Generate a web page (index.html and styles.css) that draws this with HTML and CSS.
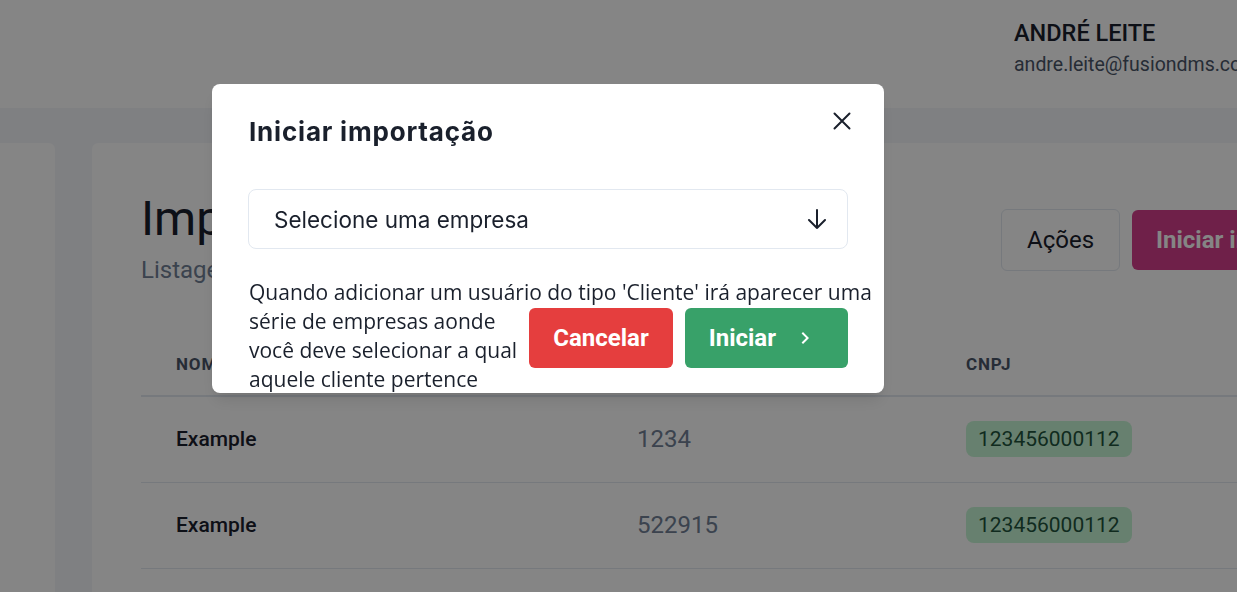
FILE: index.html
```html
<!DOCTYPE html>
<html lang="pt-BR">
<head>
<meta charset="utf-8">
<title>Importações</title>
<link rel="stylesheet" href="styles.css">
</head>
<body>
<div class="page">
  <header class="topbar">
    <div class="user">
      <div class="user-name">André Leite</div>
      <div class="user-email">andre.leite@fusiondms.com</div>
    </div>
  </header>
  <div class="content">
    <aside class="sidebar"></aside>
    <main class="main">
      <div class="main-head">
        <div class="heading">
          <h1 class="title">Importações</h1>
          <p class="subtitle">Listagem de importações</p>
        </div>
        <div class="head-actions">
          <button class="btn btn-outline">Ações</button>
          <button class="btn btn-pink">Iniciar importação</button>
        </div>
      </div>
      <table class="table">
        <thead>
          <tr><th class="col-name">Nome</th><th class="col-code">Código</th><th>CNPJ</th></tr>
        </thead>
        <tbody>
          <tr><td class="cell-name">Example</td><td class="cell-code">1234</td><td><span class="badge">123456000112</span></td></tr>
          <tr><td class="cell-name">Example</td><td class="cell-code">522915</td><td><span class="badge">123456000112</span></td></tr>
          <tr><td class="cell-name">Example</td><td class="cell-code">7781</td><td><span class="badge">123456000112</span></td></tr>
        </tbody>
      </table>
    </main>
  </div>
</div>

<div class="overlay">
  <section class="modal" role="dialog" aria-label="Iniciar importação">
    <h2 class="modal-title">Iniciar importação</h2>
    <button class="modal-close" aria-label="Fechar">
      <svg width="18" height="18" viewBox="0 0 18 18"><path d="M1.5 1.5L16.5 16.5M16.5 1.5L1.5 16.5" stroke="#1a202c" stroke-width="2" fill="none" stroke-linecap="round"/></svg>
    </button>
    <div class="select">
      <span>Selecione uma empresa</span>
      <svg class="select-icon" width="20" height="20" viewBox="0 0 20 20"><path d="M10 1V19M2 11L10 19L18 11" stroke="#1a202c" stroke-width="2" fill="none" stroke-linecap="round" stroke-linejoin="round"/></svg>
    </div>
    <p class="modal-text">Quando adicionar um usuário do tipo 'Cliente' irá aparecer uma <span class="modal-actions"><button class="btn btn-red">Cancelar</button><button class="btn btn-green">Iniciar<svg class="chev" width="24" height="24" viewBox="0 0 24 24"><path d="M10 6L8.59 7.41 13.17 12l-4.58 4.59L10 18l6-6z" fill="#fff"/></svg></button></span>série de empresas aonde você deve selecionar a qual aquele cliente pertence</p>
  </section>
</div>
</body>
</html>
```

FILE: styles.css
```css
* { box-sizing: border-box; }

html, body {
  margin: 0;
  padding: 0;
}

body {
  font-family: "Roboto", "Liberation Sans", sans-serif;
  color: #1a202c;
  background: #f3f5f9;
  overflow: hidden;
  width: 1237px;
  height: 592px;
}

.page {
  width: 1237px;
  height: 592px;
  overflow: hidden;
}

/* top bar */
.topbar {
  height: 108px;
  background: #fff;
  padding: 17px 0 0 1014px;
}

.user-name {
  font-size: 23.5px;
  font-weight: 500;
  text-transform: uppercase;
  line-height: 33px;
  white-space: nowrap;
}

.user-email {
  font-size: 19.5px;
  line-height: 29px;
  color: #4a5568;
  white-space: nowrap;
}

/* content */
.content {
  display: flex;
  padding-top: 35px;
  height: 484px;
}

.sidebar {
  flex: 0 0 55px;
  background: #fff;
  border-top-right-radius: 6px;
  margin-right: 37px;
}

.main {
  flex: 0 0 1145px;
  background: #fff;
  border-top-left-radius: 6px;
  padding: 47px 0 0 49px;
  overflow: hidden;
}

.main-head {
  display: flex;
  align-items: center;
}

.heading {
  flex: 0 0 860px;
}

.title {
  margin: 0;
  font-size: 48px;
  line-height: 58px;
  font-weight: 400;
  color: #1a202c;
}

.subtitle {
  margin: 4px 0 0;
  font-size: 24px;
  line-height: 36px;
  color: #718096;
}

.head-actions {
  display: flex;
  align-items: center;
  gap: 12px;
  flex-shrink: 0;
  margin-top: 2px;
}

.btn {
  font-family: "Roboto", "Liberation Sans", sans-serif;
  border: 0;
  border-radius: 6px;
  font-size: 24px;
  cursor: pointer;
  white-space: nowrap;
}

.btn-outline {
  height: 62px;
  padding: 0 25px;
  background: #fff;
  border: 1px solid #e2e8f0;
  color: #1a202c;
}

.btn-pink {
  height: 60px;
  padding: 0 24px;
  background: #d53f8c;
  color: #fff;
  font-weight: 700;
}

/* table */
.table {
  width: 1096px;
  margin-top: 42px;
  border-collapse: collapse;
}

.table th {
  text-align: left;
  font-size: 17px;
  font-weight: 700;
  letter-spacing: 0.05em;
  text-transform: uppercase;
  color: #4a5568;
  line-height: 20px;
  padding: 24px 35px 21px;
  border-bottom: 2px solid #e2e8f0;
}

.table .col-name { width: 461px; }
.table .col-code { width: 329px; }

.table td {
  padding: 24px 35px 25px;
  line-height: 36px;
  height: 86px;
  border-bottom: 1px solid #e2e8f0;
  vertical-align: middle;
}

.cell-name {
  font-size: 21px;
  font-weight: 500;
  color: #1a202c;
}

.cell-code {
  font-size: 24px;
  color: #718096;
}

.badge {
  display: inline-block;
  vertical-align: top;
  background: #c6f6d5;
  color: #22543d;
  font-size: 21px;
  line-height: 36px;
  padding: 0 12px;
  border-radius: 8px;
}

/* modal */
.overlay {
  position: fixed;
  inset: 0;
  background: rgba(0, 0, 0, 0.48);
  padding: 84px 0 0 212px;
}

.modal {
  position: relative;
  width: 672px;
  height: 309px;
  background: #fff;
  border-radius: 8px;
  padding: 0 36px 0 37px;
  box-shadow: 0 10px 15px -3px rgba(0, 0, 0, 0.1), 0 4px 6px -2px rgba(0, 0, 0, 0.05);
}

.modal-title {
  margin: 0;
  padding-top: 33px;
  font-family: "Inter", sans-serif;
  font-size: 26px;
  font-weight: 700;
  letter-spacing: 0.8px;
  line-height: 30px;
  color: #1a202c;
}

.modal-close {
  position: absolute;
  top: 24px;
  right: 29px;
  width: 26px;
  height: 26px;
  border: 0;
  background: transparent;
  padding: 0;
  display: flex;
  align-items: center;
  justify-content: center;
}

.select {
  margin: 42px 0 0 -1px;
  height: 60px;
  border: 1px solid #e2e8f0;
  border-radius: 8px;
  display: flex;
  align-items: center;
  justify-content: space-between;
  padding: 0 20px 0 25px;
  font-family: "Inter", sans-serif;
  font-size: 22.5px;
  color: #1a202c;
}

.modal-text {
  margin: 29px -40px 0 0;
  font-family: "Open Sans", sans-serif;
  font-size: 21px;
  line-height: 29px;
  color: #1a202c;
}

.modal-actions {
  float: right;
  display: flex;
  gap: 12px;
  margin: 1px 40px 0 4px;
}

.btn-red,
.btn-green {
  height: 60px;
  font-weight: 700;
  color: #fff;
  display: flex;
  align-items: center;
}

.btn-red {
  background: #e53e3e;
  padding: 0 24px;
}

.btn-green {
  background: #38a169;
  padding: 0 31px 0 24px;
  gap: 17px;
}

.chev {
  display: block;
}
```
